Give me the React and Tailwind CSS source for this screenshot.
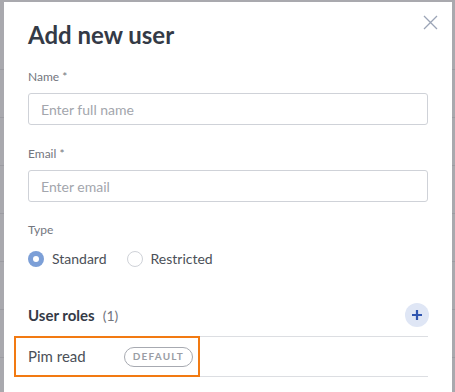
import React from "react";

const font = { fontFamily: "Lato, 'Noto Sans', sans-serif" };

export default function App() {
  const rows = [0, 1, 2, 3, 4, 5, 6];
  return (
    <div className="relative w-[455px] h-[392px] overflow-hidden bg-[#a9a9ae]" style={font}>
      <div className="flex flex-col pt-[22px]">
        {rows.map((r) => (
          <div key={r} className="h-[48px] border-b border-[#9c9ca2]" />
        ))}
      </div>
      <div className="absolute left-[4px] top-[2px] w-[448px] h-[420px] bg-white px-6">
        <button className="absolute right-[14px] top-[12px] w-[16px] h-[16px] flex items-center justify-center">
          <svg width="15" height="15" viewBox="0 0 15 15">
            <path d="M1 1L14 14M14 1L1 14" stroke="#9ba4b6" strokeWidth="1.3" />
          </svg>
        </button>
        <h1 className="mt-[18px] text-[24px] leading-[30px] font-bold text-[#343a46]">Add new user</h1>

        <div className="mt-[19px] text-[12px] leading-[16px] text-[#73767e]">Name *</div>
        <div className="mt-[8px] h-[32px] border border-[#cfd2d8] rounded-[3px] flex items-center px-3 text-[14px] text-[#a3a6ad]">
          Enter full name
        </div>

        <div className="mt-[21px] text-[12px] leading-[16px] text-[#73767e]">Email *</div>
        <div className="mt-[8px] h-[32px] border border-[#cfd2d8] rounded-[3px] flex items-center px-3 text-[14px] text-[#a3a6ad]">
          Enter email
        </div>

        <div className="mt-[20px] text-[12px] leading-[16px] text-[#73767e]">Type</div>
        <div className="mt-[10px] flex items-center gap-[8px] text-[14px] text-[#4b5058]">
          <div className="flex items-center gap-[8px]">
            <span className="w-[16px] h-[16px] rounded-full bg-[#7c9fd7] flex items-center justify-center">
              <span className="w-[6px] h-[6px] rounded-full bg-white" />
            </span>
            <span>Standard</span>
          </div>
          <div className="ml-[12px] flex items-center gap-[8px]">
            <span className="w-[16px] h-[16px] rounded-full border border-[#cfd2d8]" />
            <span>Restricted</span>
          </div>
        </div>

        <div className="mt-[34px] flex items-center justify-between h-[24px]">
          <div className="flex items-baseline gap-[8px]">
            <span className="text-[15px] font-bold text-[#343a46]">User roles</span>
            <span className="text-[14px] text-[#73767e]">(1)</span>
          </div>
          <button className="w-[24px] h-[24px] rounded-full bg-[#dfe6f5] flex items-center justify-center mr-[-1px]">
            <svg width="12" height="12" viewBox="0 0 12 12">
              <path d="M6 1V11M1 6H11" stroke="#2f55b0" strokeWidth="2.2" />
            </svg>
          </button>
        </div>
        <div className="mt-[9px] border-b border-[#dcdee2]" />
        <div className="relative h-[40px] flex items-center border-b border-[#dcdee2]">
          <div className="absolute left-[-14px] top-[-1px] w-[186px] h-[41px] border-2 border-[#f27a12]" />
          <span className="text-[15px] text-[#4b5058]">Pim read</span>
          <span className="ml-[38px] h-[20px] px-[8px] rounded-full border border-[#a7aab1] flex items-center text-[10px] font-bold tracking-[1.2px] text-[#9a9da5]">
            DEFAULT
          </span>
        </div>
      </div>
    </div>
  );
}
